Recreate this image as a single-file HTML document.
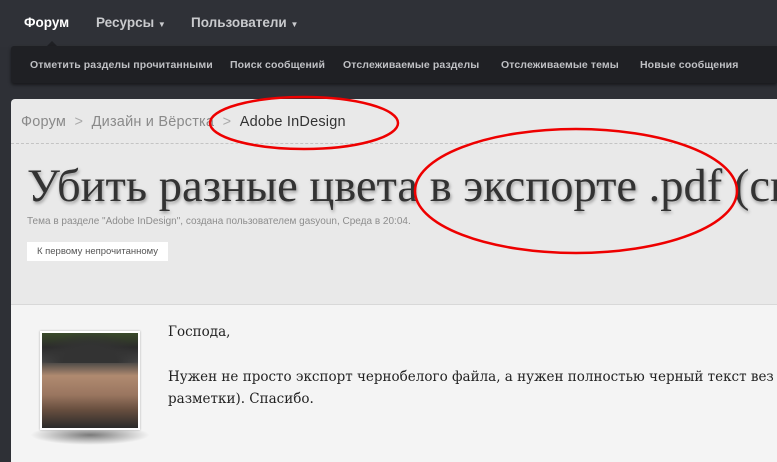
<!DOCTYPE html>
<html><head><meta charset="utf-8"><style>
body{margin:0;width:777px;height:461px;overflow:hidden;background:#2e3036;font-family:"Liberation Sans","DejaVu Sans",sans-serif;position:relative}
.a{position:absolute;white-space:nowrap}
.top{left:0;top:0;width:777px;height:47px;background:#2f3137}
.sub{left:11px;top:46px;width:766px;height:37px;background:#1f2024;border-radius:3px 0 0 3px;box-shadow:0 2px 3px rgba(0,0,0,.5)}
.sub span{color:#bfc0c4;font-size:10.5px;font-weight:bold;position:absolute;top:13px;letter-spacing:.1px}
.panel{left:11px;top:99px;width:766px;height:362px;background:#e9e9e9;border-radius:4px 0 0 0}
.post{left:11px;top:304px;width:766px;height:157px;background:#f4f4f4;border-top:1px solid #d8d8d8}
.pt{font-family:'DejaVu Serif','Liberation Serif',serif;font-size:13.5px;color:#222}
</style></head><body>
<div class="a top"></div>
<div class="a" style="left:24px;top:15px;font-size:13.5px;font-weight:bold;color:#fff">Форум</div>
<div class="a" style="left:46px;top:41px;width:0;height:0;border:6px solid transparent;border-bottom-color:#1f2024;border-top:0"></div>
<div class="a" style="left:96px;top:15px;font-size:13.5px;font-weight:bold;color:#c9cacd">Ресурсы <span style="font-size:8px">▼</span></div>
<div class="a" style="left:191px;top:15px;font-size:13.5px;font-weight:bold;color:#c9cacd">Пользователи <span style="font-size:8px">▼</span></div>
<div class="a sub">
<span style="left:19px">Отметить разделы прочитанными</span>
<span style="left:219px">Поиск сообщений</span>
<span style="left:332px">Отслеживаемые разделы</span>
<span style="left:490px">Отслеживаемые темы</span>
<span style="left:629px">Новые сообщения</span>
</div>
<div class="a panel"></div>
<div class="a" style="left:21px;top:114px;font-size:14.5px;color:#8a8a8a;letter-spacing:.2px">Форум &nbsp;<span style="color:#aaa">&gt;</span>&nbsp; Дизайн и Вёрстка &nbsp;<span style="color:#aaa">&gt;</span>&nbsp; <span style="color:#333">Adobe InDesign</span></div>
<div class="a" style="left:11px;top:143px;width:766px;border-top:1px dashed #c4c4c4"></div>
<div class="a" style="left:27px;top:160px;font-family:'Liberation Serif',serif;font-size:46.5px;color:#333;text-shadow:1px 2px 3px rgba(0,0,0,.35)">Убить разные цвета в экспорте .pdf (св</div>
<div class="a" style="left:27px;top:216px;font-size:10px;color:#8d8d8d">Тема в разделе "Adobe InDesign", создана пользователем gasyoun, Среда в 20:04.</div>
<div class="a" style="left:27px;top:242px;width:141px;height:19px;background:#fff;font-size:9.5px;color:#555;line-height:19px;text-align:center">К первому непрочитанному</div>
<div class="a post"></div>
<div class="a" style="left:30px;top:425px;width:120px;height:20px;border-radius:50%;background:radial-gradient(ellipse,rgba(0,0,0,.5),rgba(0,0,0,0) 70%)"></div>
<div class="a" style="left:40px;top:331px;width:100px;height:99px;background:#fff;box-shadow:0 0 2px #aaa"></div>
<div class="a" style="left:42px;top:333px;width:96px;height:95px;background:linear-gradient(180deg,#3a4a2a 0%,#2b2b2b 15%,#444 30%,#b08a70 45%,#9a7660 65%,#6a5040 80%,#2a2a2a 100%)"></div>
<div class="a" style="left:42px;top:333px;width:96px;height:30px;background:radial-gradient(ellipse at 50% 100%,#333 40%,rgba(40,60,30,0) 75%)"></div>
<div class="a pt" style="left:168px;top:324px">Господа,</div>
<div class="a pt" style="left:168px;top:369px">Нужен не просто экспорт чернобелого файла, а нужен полностью черный текст вез</div>
<div class="a pt" style="left:168px;top:391px">разметки). Спасибо.</div>
<svg class="a" style="left:0;top:0" width="777" height="461"><ellipse cx="304" cy="123" rx="94" ry="26" fill="none" stroke="#e00" stroke-width="2.5"/><ellipse cx="576" cy="191" rx="161" ry="62" fill="none" stroke="#e00" stroke-width="2.5"/></svg>
</body></html>
